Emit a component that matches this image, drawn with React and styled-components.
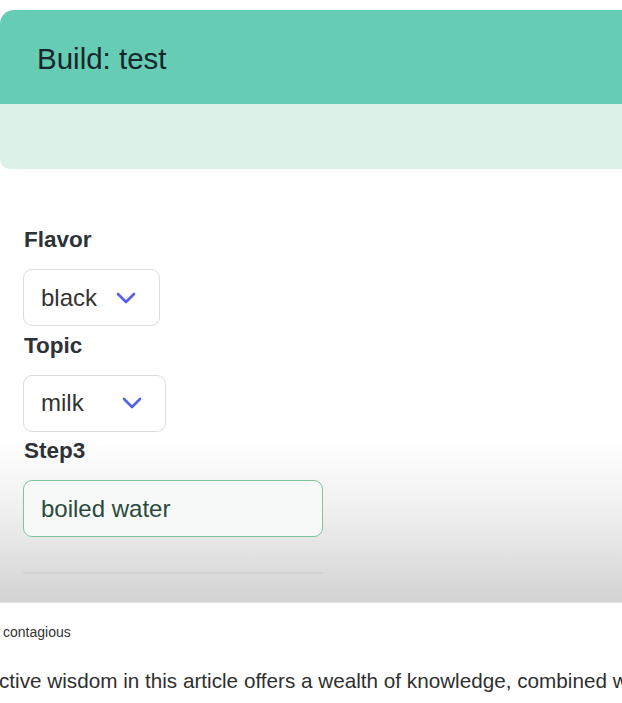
import styled, { createGlobalStyle } from "styled-components";

const GlobalStyle = createGlobalStyle`
  html, body {
    margin: 0;
    padding: 0;
    background: #ffffff;
    overflow: hidden;
  }
  body {
    font-family: "Liberation Sans", Arial, sans-serif;
    color: #333;
  }
`;

const Chevron = () => (
  <svg width="20" height="12" viewBox="0 0 20 12" fill="none">
    <path
      d="M2 2 L10 10 L18 2"
      stroke="#5560ea"
      strokeWidth="2.6"
      strokeLinecap="round"
      strokeLinejoin="round"
    />
  </svg>
);

const Dropdown = ({ value, width }) => (
  <StyledSelect $width={width}>
    <span>{value}</span>
    <Chevron />
  </StyledSelect>
);

const App = () => {
  return (
    <>
      <GlobalStyle />
      <StyledPage>
        <StyledPanel>
          <StyledHeader>
            <h1>Build: test</h1>
          </StyledHeader>
          <StyledStrip />
          <StyledForm>
            <StyledLabel>Flavor</StyledLabel>
            <Dropdown value="black" width={137} />
            <StyledLabel>Topic</StyledLabel>
            <Dropdown value="milk" width={143} />
            <StyledLabel>Step3</StyledLabel>
            <StyledInput>boiled water</StyledInput>
            <StyledRule />
          </StyledForm>
        </StyledPanel>
        <StyledCaption>contagious</StyledCaption>
        <StyledText>
          ctive wisdom in this article offers a wealth of knowledge, combined
          with
        </StyledText>
      </StyledPage>
    </>
  );
};

const StyledPage = styled.div`
  width: 622px;
  height: 703px;
  padding-top: 10px;
  box-sizing: border-box;
  overflow: hidden;
`;
const StyledPanel = styled.div`
  width: 640px;
  background: linear-gradient(
    to bottom,
    #ffffff 0px,
    #ffffff 430px,
    #f0f0f0 500px,
    #d3d3d3 592px
  );
  border-bottom: 1px solid #e2e2e2;
`;
const StyledHeader = styled.div`
  height: 94px;
  box-sizing: border-box;
  padding: 4px 0 0 37px;
  background: #66cdb4;
  border-top-left-radius: 14px;
  display: flex;
  align-items: center;
  h1 {
    margin: 0;
    font-size: 29.5px;
    font-weight: 400;
    color: #16262a;
  }
`;
const StyledStrip = styled.div`
  height: 65px;
  background: #dcf1e8;
  border-bottom-left-radius: 10px;
`;
const StyledForm = styled.div`
  padding: 59px 0 28px 23px;
  display: flex;
  flex-direction: column;
  align-items: flex-start;
`;
const StyledLabel = styled.div`
  font-size: 22.5px;
  line-height: 24px;
  font-weight: 700;
  color: #2e3236;
  margin-left: 1px;
  margin-bottom: 17px;
`;
const StyledSelect = styled.div`
  width: ${(props) => props.$width}px;
  height: 57px;
  box-sizing: border-box;
  border: 1.5px solid #dcdcdc;
  border-radius: 9px;
  background: #ffffff;
  display: flex;
  align-items: center;
  justify-content: space-between;
  padding: 0 23px 0 17px;
  margin-bottom: 7.5px;
  font-size: 24px;
  color: #333;
`;
const StyledInput = styled.div`
  width: 300px;
  height: 57px;
  box-sizing: border-box;
  border: 1.5px solid #7ec49c;
  border-radius: 9px;
  background: #f7f9f8;
  display: flex;
  align-items: center;
  padding-left: 17px;
  font-size: 24px;
  color: #2b4a3e;
`;
const StyledRule = styled.div`
  width: 300px;
  height: 2px;
  background: #d2d2d2;
  margin-top: 35px;
`;
const StyledCaption = styled.div`
  font-size: 14px;
  color: #333;
  padding-left: 3px;
  margin-top: 21px;
`;
const StyledText = styled.div`
  font-size: 20.7px;
  color: #2f2f2f;
  white-space: nowrap;
  margin-top: 29px;
  margin-left: -1px;
`;

export default App;
